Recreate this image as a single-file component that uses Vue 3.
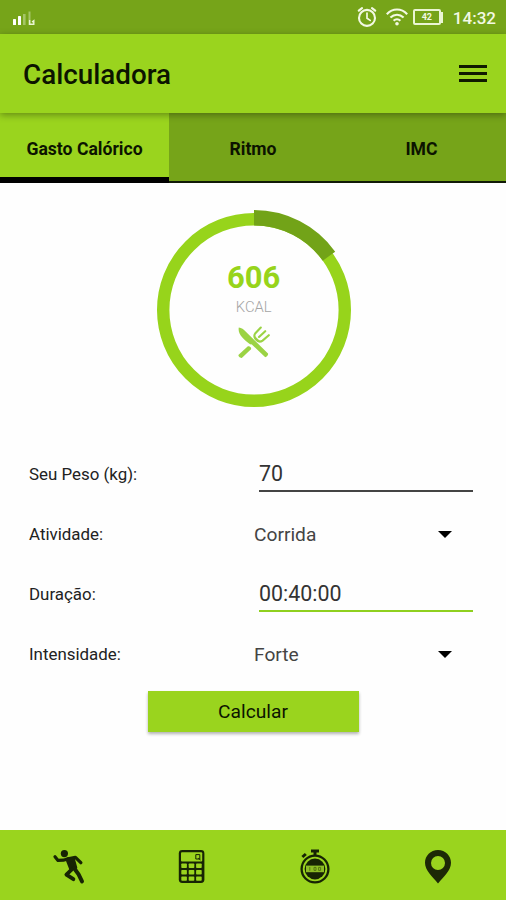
<template>
  <div class="screen">
    <!-- Status bar -->
    <div class="status-bar">
      <svg class="signal" width="24" height="16" viewBox="0 0 24 16">
        <rect x="1" y="9" width="3" height="6" rx="0.6" fill="#fff" />
        <rect x="6" y="6" width="3" height="9" rx="0.6" fill="#fff" />
        <rect x="11" y="4" width="2.6" height="11" fill="#a5c566" />
        <path d="M16.5 1.5h2V15h-2z" fill="#a5c566" />
        <path d="M17.6 10v4.2h4.2v-3.6l-1.8 1.4" fill="none" stroke="#eaf5d3" stroke-width="1.4" />
      </svg>
      <div class="status-icons">
        <svg width="20" height="22" viewBox="0 0 20 22" fill="none" stroke="#f3f9e4" stroke-linecap="round">
          <circle cx="10" cy="11.9" r="8" stroke-width="2.1" />
          <path d="M1.8 4.6L5 2.2M18.2 4.6L15 2.2" stroke-width="2.2" />
          <path d="M10 7v5.2l3.2 2.2" stroke-width="1.7" />
        </svg>
        <svg class="wifi" width="22" height="18" viewBox="0 0 22 18" fill="none" stroke="#f3f9e4" stroke-width="2.1">
          <path d="M0.8 6.2C6.6 0 15.4 0 21.2 6.2" />
          <path d="M4.4 9.6c3.9-3.9 9.3-3.9 13.2 0" />
          <path d="M7.6 12.8c2-2 4.8-2 6.8 0" />
          <circle cx="11" cy="15.8" r="1.8" fill="#f3f9e4" stroke="none" />
        </svg>
        <div class="battery"><span>42</span></div>
        <i class="battery-cap"></i>
        <span class="clock">14:32</span>
      </div>
    </div>

    <!-- Header -->
    <header class="app-header">
      <h1 class="title">Calculadora</h1>
      <button class="menu-btn" aria-label="Menu">
        <span></span><span></span><span></span>
      </button>
    </header>

    <!-- Tabs -->
    <nav class="tabs">
      <button
        v-for="(tab, index) in tabs"
        :key="tab"
        class="tab"
        :class="{ active: activeTab === index }"
        @click="activeTab = index"
      >
        {{ tab }}
      </button>
    </nav>

    <!-- Result ring -->
    <div class="result">
      <svg class="ring" width="202" height="202" viewBox="-101 -101 202 202" fill="none">
        <circle r="90.8" stroke="#97d41b" stroke-width="12.4" />
        <path :d="arcPath" stroke="#72a318" stroke-width="15.4" />
      </svg>
      <div class="result-info">
        <span class="kcal">{{ calories }}</span>
        <span class="unit">KCAL</span>
        <svg class="cutlery" width="34" height="34" viewBox="0 0 34 34" fill="#9bd344">
          <path d="M1.8 1.4C4.6 1.6 6.6 3.4 8.6 5.4L18 14.8L31 27.6C31.8 28.6 29.2 31.8 28 31L15.6 19.2C14.8 18.2 13.4 18.6 12.4 17.8C7 13.6 0.4 8.6 1.8 1.4Z" />
          <path d="M10.6 20.4C12 19.4 15.2 21.6 13.8 23.4L5 31.8C3.8 32.8 0.6 30 1.6 28.8Z" />
          <path d="M23.8 1.6L18.4 7.2C16.8 9.2 17.2 11.4 18.8 13.4C20.8 15.8 23.6 16 25.6 14.6L31.8 9.2M28.2 5.2L22 11" fill="none" stroke="#9bd344" stroke-width="2.1" stroke-linecap="round" />
          <path d="M17.8 10C18 13 20 15.8 23.6 15.6L20.4 12.6Z" />
        </svg>
      </div>
    </div>

    <!-- Form -->
    <form class="form" @submit.prevent>
      <div class="form-row">
        <label>Seu Peso (kg):</label>
        <input v-model="weight" class="field" type="text">
      </div>
      <div class="form-row">
        <label>Atividade:</label>
        <div class="select">{{ activity }}<i class="caret"></i></div>
      </div>
      <div class="form-row">
        <label>Duração:</label>
        <input v-model="duration" class="field focused" type="text">
      </div>
      <div class="form-row">
        <label>Intensidade:</label>
        <div class="select">{{ intensity }}<i class="caret"></i></div>
      </div>
      <button class="btn-calc" type="submit">Calcular</button>
    </form>

    <!-- Bottom navigation -->
    <footer class="bottom-nav">
      <svg width="34" height="36" viewBox="0 0 34 36" fill="none" stroke="#172404" stroke-linecap="round" stroke-linejoin="round">
        <circle cx="13.4" cy="4.6" r="3.6" fill="#172404" stroke="none" />
        <path d="M4 7.8L7 11.4L12.4 11.2L17 9.8" stroke-width="3.2" />
        <path d="M17 9.8L24.4 8.4L29.8 13.6" stroke-width="3.4" />
        <path d="M16.2 11L22.4 10.2L24.8 18.6L20 20.6Z" fill="#172404" stroke-width="3" />
        <path d="M23 19L27.6 25.4L31 32.4" stroke-width="4" />
        <path d="M20.6 20.6L15.4 25.6L22.4 30.2" stroke-width="3.8" />
      </svg>
      <svg width="34" height="36" viewBox="0 0 34 36">
        <rect x="4.8" y="1" width="25.6" height="33" rx="3.4" fill="#172404" />
        <rect x="7" y="3.2" width="21.2" height="9.2" rx="1" fill="#9ad41e" />
        <path d="M21.8 5.6h4v4.4h-4zM24.2 9.2l2.4 1.8" fill="none" stroke="#172404" stroke-width="1" />
        <g fill="#9ad41e">
          <template v-for="row in 3" :key="row">
            <rect
              v-for="col in 3"
              :key="col"
              :x="-0.1 + col * 7.4"
              :y="8.2 + row * 6.4"
              width="5.6"
              height="4.4"
              rx="0.7"
            />
          </template>
        </g>
      </svg>
      <svg width="34" height="36" viewBox="0 0 34 36" fill="none" stroke="#172404">
        <path d="M13 2h8M17 2v4" stroke-width="3" />
        <path d="M4.4 8l3.4-3" stroke-width="3" />
        <circle cx="17" cy="20" r="13.4" stroke-width="2.3" />
        <circle cx="17" cy="20" r="10.4" fill="#172404" stroke="none" />
        <rect x="8" y="16.6" width="18" height="6.6" fill="#8dbd25" stroke="none" />
        <path d="M11.8 18v3.8M16 18.4h2v3h-2zM20.6 18.4h2v3h-2z" stroke="#50700f" stroke-width="0.9" />
      </svg>
      <svg width="34" height="36" viewBox="0 0 34 36">
        <path d="M17 1C9.6 1 4 6.7 4 13.8C4 21.4 11 27.2 17 34.4C23 27.2 30 21.4 30 13.8C30 6.7 24.4 1 17 1ZM17 7A7 7 0 1 1 17 21A7 7 0 1 1 17 7Z" fill="#1d2906" fill-rule="evenodd" />
      </svg>
    </footer>
  </div>
</template>

<script setup>
import { ref, computed } from 'vue'

const tabs = ['Gasto Calórico', 'Ritmo', 'IMC']
const activeTab = ref(0)

// Form values
const weight = ref('70')
const activity = ref('Corrida')
const duration = ref('00:40:00')
const intensity = ref('Forte')

const calories = ref(606)
const progressAngle = ref(54.3)

// Arc starts at 12 o'clock and goes clockwise
const arcPath = computed(() => {
  const r = 92.3
  const rad = (progressAngle.value * Math.PI) / 180
  const x = r * Math.sin(rad)
  const y = -r * Math.cos(rad)
  return `M0 ${-r}A${r} ${r} 0 0 1 ${x} ${y}`
})
</script>

<style>
body {
  background: #fff;
}
</style>

<style scoped>
.screen {
  display: flex;
  flex-direction: column;
  height: 900px;
  overflow: hidden;
  background: #fefefe;
  font-family: Roboto, sans-serif;
  color: #0c1400;
}

button {
  border: 0;
  padding: 0;
  background: none;
  font-family: inherit;
  color: inherit;
}

.status-bar {
  flex: none;
  display: flex;
  justify-content: space-between;
  align-items: center;
  height: 34px;
  padding: 0 10px 0 12px;
  box-sizing: border-box;
  background: #76a419;
}

.signal {
  margin-top: 2px;
}

.status-icons {
  display: flex;
  align-items: center;
  color: #f3f9e4;
}

.wifi {
  margin-left: 9px;
}

.battery {
  display: flex;
  align-items: center;
  justify-content: center;
  width: 28px;
  height: 16px;
  margin-left: 5px;
  box-sizing: border-box;
  border: 2px solid #eaf5d3;
  border-radius: 2px;
  font-size: 9px;
  font-weight: 700;
}

.battery-cap {
  width: 2px;
  height: 11px;
  background: #eaf5d3;
}

.clock {
  margin-left: 10px;
  font-size: 17px;
  font-weight: 500;
  line-height: 34px;
  padding-top: 2px;
}

.app-header {
  flex: none;
  position: relative;
  z-index: 1;
  display: flex;
  justify-content: space-between;
  align-items: center;
  height: 79px;
  padding: 0 19px 0 23px;
  box-sizing: border-box;
  background: #9ad41e;
  box-shadow: 0 2px 7px rgba(0, 0, 0, 0.35);
}

.title {
  margin: 3px 0 0;
  font-size: 27.8px;
  font-weight: 500;
  line-height: 32px;
}

.menu-btn {
  display: flex;
  flex-direction: column;
  gap: 4px;
  width: 28px;
}

.menu-btn span {
  height: 3px;
  background: #101a00;
}

.tabs {
  flex: none;
  display: grid;
  grid-template-columns: 169px 168px 169px;
  height: 70px;
}

.tab {
  background: #76a419;
  border-bottom: 2px solid #111a08;
  padding-top: 4px;
  font-size: 17.6px;
  font-weight: 700;
}

.tab.active {
  background: #9ad41e;
  border-bottom: 6px solid #000;
  padding-top: 8px;
}

.result {
  display: grid;
  justify-items: center;
  width: 202px;
  margin: 26px 0 0 152.7px;
}

.ring,
.result-info {
  grid-area: 1 / 1;
}

.result-info {
  display: flex;
  flex-direction: column;
  align-items: center;
  padding-top: 51px;
}

.kcal {
  font-size: 31px;
  font-weight: 700;
  line-height: 36px;
  color: #97d41b;
}

.unit {
  margin-top: 2px;
  font-size: 14.8px;
  font-weight: 300;
  line-height: 18px;
  color: #a5a5a5;
}

.cutlery {
  margin-top: 10px;
}

.form {
  display: flex;
  flex-direction: column;
  padding: 33px 33px 0 29px;
}

.form-row {
  display: grid;
  grid-template-columns: 225px 1fr;
  align-items: center;
  height: 60px;
}

label {
  font-size: 16.9px;
  color: #222;
}

.field {
  height: 34px;
  margin: 1px 0 0 5px;
  padding: 0;
  min-width: 0;
  box-sizing: border-box;
  border: 0;
  border-bottom: 2px solid #444;
  background: none;
  outline: none;
  font-family: inherit;
  font-size: 21.4px;
  color: #333;
}

.field.focused {
  border-bottom-color: #8fd01f;
}

.select {
  display: flex;
  align-items: center;
  justify-content: space-between;
  padding-right: 21px;
  font-size: 19.2px;
  color: #444;
}

.caret {
  border: 7px solid transparent;
  border-top-color: #000;
  border-bottom: 0;
}

.btn-calc {
  align-self: center;
  width: 211px;
  height: 41px;
  margin: 7px 0 0 4px;
  background: #9ad41e;
  box-shadow: 0 2px 3px rgba(0, 0, 0, 0.3);
  font-size: 19.2px;
}

.bottom-nav {
  flex: none;
  display: flex;
  justify-content: space-between;
  align-items: center;
  height: 70px;
  margin-top: auto;
  padding: 4px 51px 0;
  box-sizing: border-box;
  background: #9ad41e;
}
</style>
